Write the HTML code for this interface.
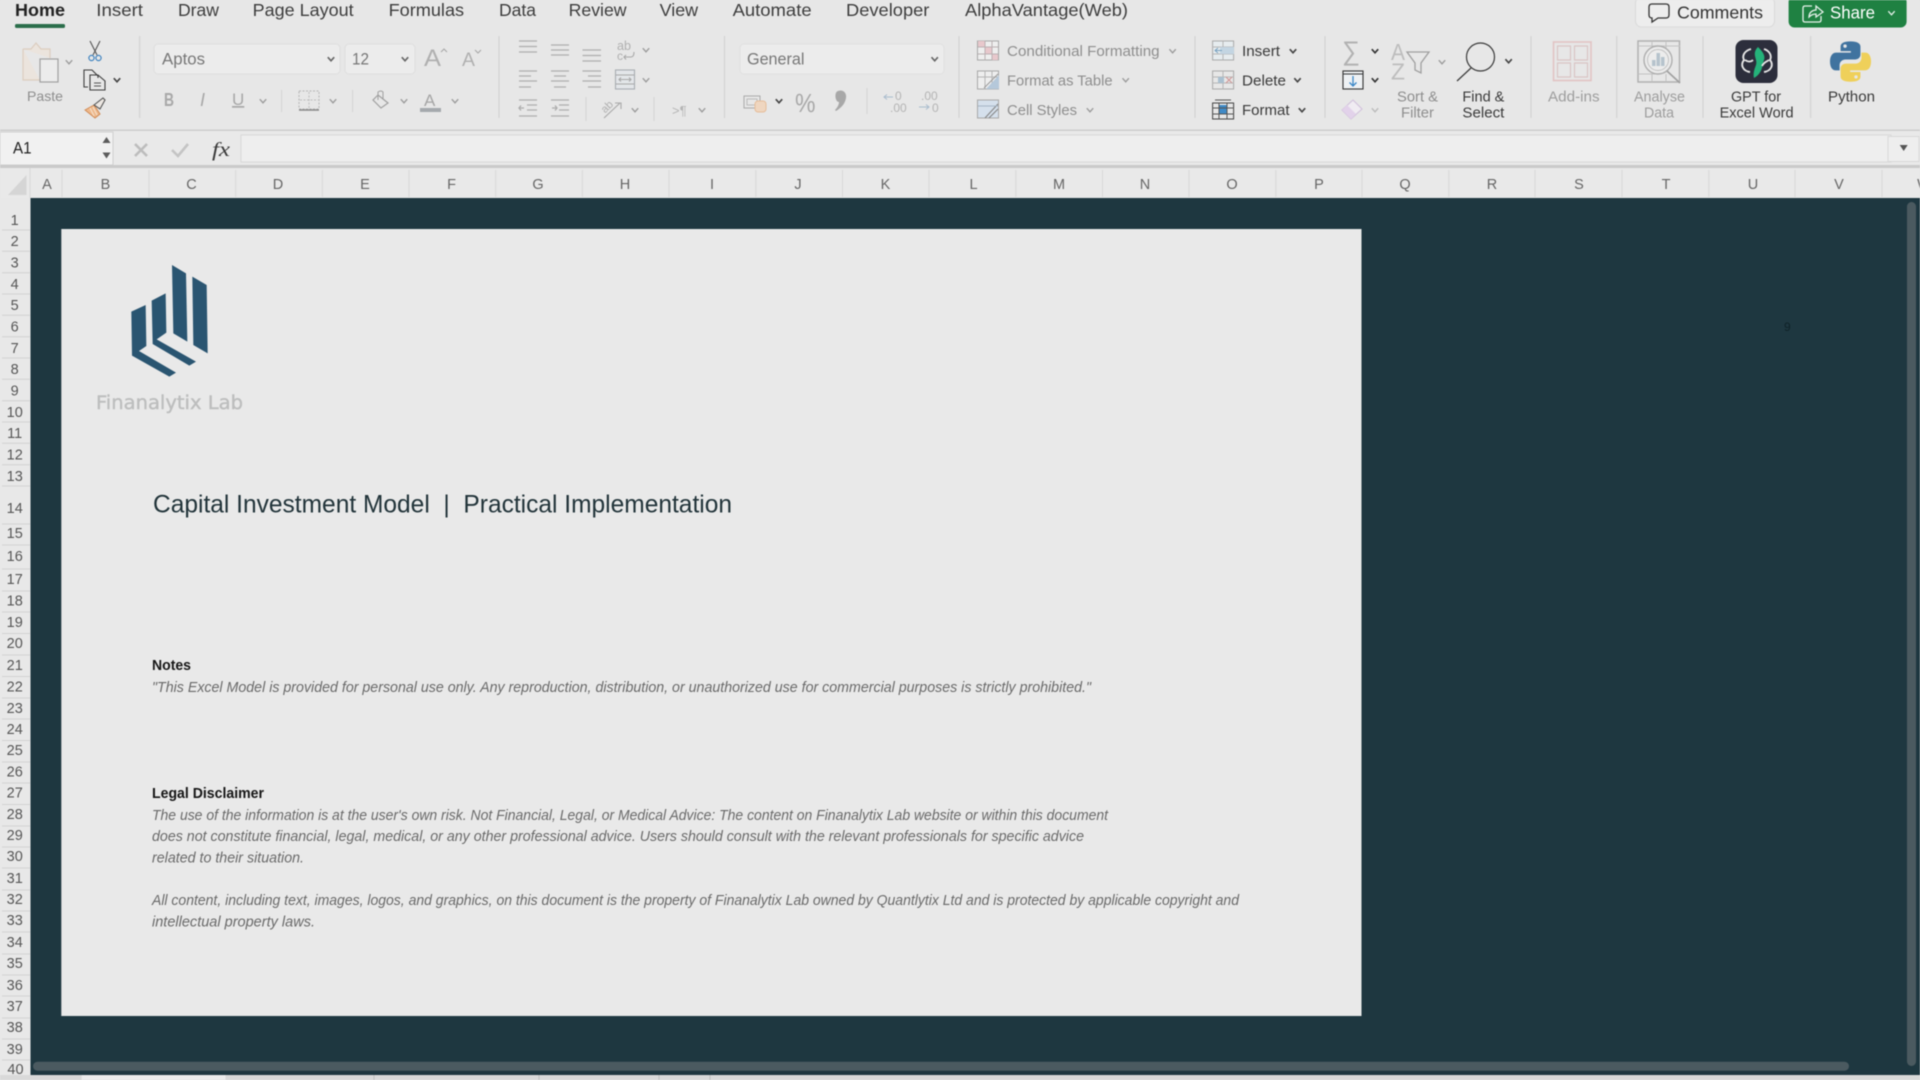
<!DOCTYPE html>
<html lang="en">
<head>
<meta charset="utf-8">
<title>Capital Investment Model</title>
<style>
html,body{margin:0;padding:0;width:1920px;height:1080px;overflow:hidden;background:#e6e6e6}
svg{display:block;filter:blur(.5px)}
text{font-family:"Liberation Sans",sans-serif;white-space:pre}
.tab{font-size:17.5px;fill:#3d3d3d}
.gr{font-size:14.5px;fill:#8e8e8e}
.dk{font-size:14.5px;fill:#3a3a3a}
.col{font-size:14.5px;fill:#666;text-anchor:middle}
.row{font-size:14.5px;fill:#565656;text-anchor:middle}
.it{font-size:14.8px;font-style:italic;fill:#6a6a6a}
.bd{font-size:14.8px;font-weight:bold;fill:#161616}
.ln{fill:none;stroke:#adadad;stroke-width:1.3}
.chev{fill:none;stroke:#9c9c9c;stroke-width:1.4}
.chevd{fill:none;stroke:#444;stroke-width:1.6}
.ic{fill:none;stroke:#a8a8a8;stroke-width:1.1}
</style>
</head>
<body>
<svg xmlns="http://www.w3.org/2000/svg" width="1920" height="1080" viewBox="0 0 1920 1080">
<defs><path id="c" d="M-3.2-1.8 0 1.8 3.2-1.8"/></defs>

<!-- ribbon -->
<rect width="1920" height="131" fill="#e7e7e7"/>
<rect y="129.5" width="1920" height="2" fill="#cdcdcd"/>

<!-- tabs -->
<text x="15" y="16" class="tab" style="font-weight:bold;fill:#222" textLength="50" lengthAdjust="spacingAndGlyphs">Home</text>
<rect x="15" y="24" width="50" height="4" rx="1.5" fill="#2b6e4b"/>
<text x="96.3" y="16" class="tab" textLength="46.7" lengthAdjust="spacingAndGlyphs">Insert</text>
<text x="178" y="16" class="tab" textLength="41" lengthAdjust="spacingAndGlyphs">Draw</text>
<text x="252.6" y="16" class="tab" textLength="101" lengthAdjust="spacingAndGlyphs">Page Layout</text>
<text x="388.6" y="16" class="tab" textLength="75.5" lengthAdjust="spacingAndGlyphs">Formulas</text>
<text x="499" y="16" class="tab" textLength="37" lengthAdjust="spacingAndGlyphs">Data</text>
<text x="568.6" y="16" class="tab" textLength="58" lengthAdjust="spacingAndGlyphs">Review</text>
<text x="659.6" y="16" class="tab" textLength="38.5" lengthAdjust="spacingAndGlyphs">View</text>
<text x="732.6" y="16" class="tab" textLength="79" lengthAdjust="spacingAndGlyphs">Automate</text>
<text x="846" y="16" class="tab" textLength="83.4" lengthAdjust="spacingAndGlyphs">Developer</text>
<text x="965" y="16" class="tab" textLength="163" lengthAdjust="spacingAndGlyphs">AlphaVantage(Web)</text>

<!-- comments/share -->
<rect x="1635.5" y="-3" width="139" height="30" rx="6" fill="#ededed" stroke="#dadada"/>
<path d="M1652 4H1666Q1669 4 1669 7V15Q1669 18 1666 18H1658L1652 22V18H1652Q1649 18 1649 15V7Q1649 4 1652 4Z" fill="none" stroke="#333" stroke-width="1.3"/>
<text x="1677" y="18.5" style="font-size:17.5px;fill:#333" textLength="86" lengthAdjust="spacingAndGlyphs">Comments</text>
<rect x="1788.6" y="-4" width="118" height="31.5" rx="6" fill="#1f8142"/>
<path d="M1812 6H1805Q1803 6 1803 8V20Q1803 22 1805 22H1819Q1821 22 1821 20V16M1809 17C1809 12 1813 10 1816 10V6L1823 12 1816 17V14C1813 14 1811 15 1809 17Z" fill="none" stroke="#e6f1ea" stroke-width="1.3"/>
<text x="1830" y="18.5" style="font-size:17.5px;fill:#fff" textLength="45" lengthAdjust="spacingAndGlyphs">Share</text>
<use href="#c" x="1891.5" y="13" fill="none" stroke="#e6f1ea" stroke-width="1.3"/>

<!-- group separators -->
<path d="M139.6 36V118M499 36V118M724.5 36V118M959 36V118M1195 36V118M1325 36V118M1531 36V118M1616.7 36V118M1703 36V118M1810.6 36V118" stroke="#d3d3d3" stroke-width="1.2"/>

<!-- clipboard -->
<path d="M23 49H31L36 43 41 49H50V58M40 80H23V49" fill="#ebe4dd" stroke="#dccdbf" stroke-width="1.2"/>
<rect x="40" y="59" width="18" height="23" fill="#ececec" stroke="#a0a0a0" stroke-width="1.2"/>
<use href="#c" x="69" y="62" class="chev"/>
<text x="27" y="101" class="gr" style="font-size:14px" textLength="36" lengthAdjust="spacingAndGlyphs">Paste</text>
<path d="M90 41 97 55M100 41 93 55" stroke="#555" stroke-width="1.1" fill="none"/>
<circle cx="91.5" cy="58" r="2.6" fill="none" stroke="#3f83c0" stroke-width="1.2"/>
<circle cx="98.5" cy="58" r="2.6" fill="none" stroke="#3f83c0" stroke-width="1.2"/>
<path d="M88 87H84V70H92L98 76V78M90 90V75H98L105 81V90Z" fill="none" stroke="#3d3d3d" stroke-width="1.1"/>
<path d="M94 83H101M94 86H101" stroke="#555"/>
<use href="#c" x="117" y="80" class="chevd"/>
<path d="M85 110 94 105 100 114 95 118Z" fill="#eeb98c" stroke="#d08a54"/>
<path d="M94 105 103 98 105 100 100 109Z" fill="#ece7e2" stroke="#555" stroke-width="1.1"/>
<path d="M90 108 94 116M93 107 97 115" stroke="#f6e2d0"/>

<!-- font controls -->
<rect x="154" y="44" width="186" height="30" rx="4" fill="#ececec" stroke="#dedede"/>
<text x="162" y="64.5" style="font-size:16.5px;fill:#777" textLength="43" lengthAdjust="spacingAndGlyphs">Aptos</text>
<use href="#c" x="331" y="59" class="chevd" style="stroke:#666"/>
<rect x="345" y="44" width="70" height="30" rx="4" fill="#ececec" stroke="#dedede"/>
<text x="352" y="64.5" style="font-size:16.5px;fill:#777" textLength="17" lengthAdjust="spacingAndGlyphs">12</text>
<use href="#c" x="405" y="59" class="chevd" style="stroke:#666"/>
<text x="424" y="66" style="font-size:24px;fill:#b0b0b0" textLength="17" lengthAdjust="spacingAndGlyphs">A</text>
<path d="M441 52 444 49 447 52" class="ic"/>
<text x="462" y="66" style="font-size:19px;fill:#b0b0b0" textLength="13" lengthAdjust="spacingAndGlyphs">A</text>
<path d="M475 50 478 53 481 50" class="ic"/>
<text x="164" y="106" style="font-size:18px;font-weight:bold;fill:#a8a8a8" textLength="10" lengthAdjust="spacingAndGlyphs">B</text>
<text x="200" y="106" style="font-size:18px;font-style:italic;fill:#a8a8a8">I</text>
<text x="232" y="105" style="font-size:17px;fill:#a8a8a8;text-decoration:underline">U</text>
<use href="#c" x="263" y="101" class="chev"/>
<path d="M281.6 90V112M352.6 90V112" stroke="#d3d3d3"/>
<rect x="299" y="91" width="20" height="18" fill="none" stroke="#b5b5b5" stroke-dasharray="2 1.5"/>
<path d="M309 92V108M300 100H318" stroke="#bcbcbc" stroke-dasharray="2 1.5"/>
<path d="M299 110H319" stroke="#888" stroke-width="1.6"/>
<use href="#c" x="333" y="101" class="chev"/>
<path d="M378 95 388 103 381 108 373 100Z" fill="none" stroke="#a0a0a0" stroke-width="1.2"/>
<path d="M378 100V92Q381 90 383 92V99" fill="none" stroke="#a0a0a0"/>
<use href="#c" x="404" y="101" class="chev"/>
<text x="424" y="106" style="font-size:17px;fill:#a6a6a6">A</text>
<rect x="420" y="108" width="21" height="4" fill="#a5a9ad"/>
<use href="#c" x="455" y="101" class="chev"/>

<!-- alignment -->
<g class="ln">
<path d="M519 41H537M519 46.5H537M519 52H537"/>
<path d="M551 45H569M551 50H569M551 55H569"/>
<path d="M582.5 50H601M582.5 55.5H601M582.5 61H601"/>
<path d="M519 71H537M519 76H531M519 81H537M519 87H531"/>
<path d="M551 71H569M554 76H566M551 81H569M554 87H566"/>
<path d="M582.5 71H601M588 76H601M582.5 81H601M588 87H601"/>
<path d="M519 100H537M527 105H537M527 110H537M519 116H537M524 108H519M521 105.5 519 108 521 110.5"/>
<path d="M551 100H569M559 105H569M559 110H569M551 116H569M552 108H557M555 105.500 557 108 555 110.500"/>
</g>
<text x="617" y="50" style="font-size:13px;fill:#b0b0b0" textLength="14" lengthAdjust="spacingAndGlyphs">ab</text>
<text x="617" y="60" style="font-size:12px;fill:#b0b0b0">c</text>
<path d="M624 57H631Q634 57 634 52M626 55 624 57 626 59.500" class="ic"/>
<rect x="615.500" y="70" width="19" height="19" fill="#e3e6e9" stroke="#a8adb2" stroke-width="1.1"/>
<path d="M616 75H634M616 84H634M619 79.500H631M621 77.500 619 79.500 621 81.500M629 77.500 631 79.500 629 81.500" class="ic"/>
<use href="#c" x="646" y="50" class="chev"/>
<use href="#c" x="646" y="80" class="chev"/>
<path d="M586 97V121M654 97V121" stroke="#d3d3d3"/>
<path d="M604 118 620 103M615 103H621V109" class="ic"/>
<text x="602" y="110" transform="rotate(-45 608 108)" style="font-size:11px;fill:#b0b0b0">ab</text>
<use href="#c" x="635" y="110" class="chev"/>
<text x="672" y="115" style="font-size:13px;fill:#b5b5b5">&gt;¶</text>
<use href="#c" x="702" y="110" class="chev"/>

<!-- number -->
<rect x="740" y="44" width="204" height="30" rx="4" fill="#ececec" stroke="#e0e0e0"/>
<text x="747" y="64.5" style="font-size:16.5px;fill:#777" textLength="57.500" lengthAdjust="spacingAndGlyphs">General</text>
<use href="#c" x="934.700" y="59" class="chevd" style="stroke:#666"/>
<rect x="744" y="96" width="16" height="12" fill="none" stroke="#aaa"/>
<rect x="747" y="99" width="10" height="6" fill="none" stroke="#bbb"/>
<rect x="755" y="101" width="11" height="11" rx="3" fill="#efd6c0" stroke="#e6bd9a"/>
<use href="#c" x="779" y="101" class="chevd"/>
<text x="795" y="112" style="font-size:26px;fill:#a8a8a8" textLength="20.500" lengthAdjust="spacingAndGlyphs">%</text>
<path d="M838 91C843 89 847 93 846 98C845 104 841 108 836 111L835 110C838 107 839 104 839 102C835 102 834 92 838 91Z" fill="#a8a8a8"/>
<path d="M867 88V114" stroke="#d3d3d3"/>
<text x="895" y="100" style="font-size:12px;fill:#b4b4b4">0</text>
<text x="890" y="112" style="font-size:12px;fill:#b4b4b4">.00</text>
<path d="M884 97H893M887 94.500 884 97 887 99.500" fill="none" stroke="#a9bccd"/>
<text x="921" y="100" style="font-size:12px;fill:#b4b4b4">.00</text>
<text x="932" y="112" style="font-size:12px;fill:#b4b4b4">0</text>
<path d="M919 107H929M926 104.500 929 107 926 109.500" fill="none" stroke="#a9bccd"/>

<!-- styles -->
<rect x="977.500" y="41" width="21" height="19" fill="#eee" stroke="#a8a8a8"/>
<path d="M978 47H985V54H992V60H998V54H992V47H985V41H978Z" fill="#e8c8cc"/>
<path d="M985 41V60M992 41V60M978 47H998M978 54H998" stroke="#bbb0b2" fill="none"/>
<text x="1007" y="56" class="gr" textLength="152.600" lengthAdjust="spacingAndGlyphs">Conditional Formatting</text>
<use href="#c" x="1172.600" y="51" class="chev"/>
<rect x="977.500" y="71" width="21" height="18" fill="#eee" stroke="#a8a8a8"/>
<path d="M978 77H998M985 71V89M992 71V89" stroke="#b4b4b4"/>
<path d="M986 89 999 75V89Z" fill="#b5c8da"/>
<path d="M984 88 998 74" stroke="#999"/>
<text x="1007" y="85.500" class="gr" textLength="105.600" lengthAdjust="spacingAndGlyphs">Format as Table</text>
<use href="#c" x="1125.700" y="80" class="chev"/>
<rect x="977.500" y="100" width="21" height="18" fill="#d5e0ec" stroke="#a8a8a8"/>
<path d="M985 118 998 104M989 118 998 109" stroke="#888" stroke-width="1.2"/>
<path d="M978 106H998" stroke="#a5b5c5"/>
<text x="1007" y="115" class="gr" textLength="70" lengthAdjust="spacingAndGlyphs">Cell Styles</text>
<use href="#c" x="1090" y="110" class="chev"/>

<!-- cells -->
<rect x="1212.600" y="41" width="21" height="19" fill="#e6ecef" stroke="#aaa"/>
<path d="M1212.600 47H1234M1212.600 54H1234M1223 41V60" stroke="#b5b5b5"/>
<rect x="1220" y="47" width="14" height="7" fill="#c3d5e2"/>
<path d="M1222 50.500H1215M1218 48 1215 50.500 1218 53" fill="none" stroke="#7aa3c0"/>
<text x="1242" y="56" class="dk" textLength="38" lengthAdjust="spacingAndGlyphs">Insert</text>
<use href="#c" x="1293" y="51" class="chevd"/>
<rect x="1212.600" y="71" width="21" height="18" fill="none" stroke="#aaa"/>
<path d="M1212.600 77H1234M1212.600 83H1234M1223 71V89" stroke="#b5b5b5"/>
<path d="M1226 77 1232 83M1232 77 1226 83" stroke="#d19a9a" stroke-width="1.2"/>
<rect x="1218" y="77" width="6" height="6" fill="#aac0d0"/>
<text x="1242" y="85.500" class="dk" textLength="44" lengthAdjust="spacingAndGlyphs">Delete</text>
<use href="#c" x="1297.500" y="80" class="chevd"/>
<rect x="1212.600" y="103" width="21" height="16" fill="none" stroke="#444"/>
<rect x="1219" y="105" width="8" height="9" fill="#3f8ac7"/>
<path d="M1212.600 108H1234M1212.600 114H1234M1219 103V119M1227 103V119M1215 100H1231" stroke="#555" fill="none"/>
<text x="1242" y="115" class="dk" textLength="47.500" lengthAdjust="spacingAndGlyphs">Format</text>
<use href="#c" x="1302" y="110" class="chevd"/>

<!-- editing -->
<text x="1342" y="60" style="font-size:27px;fill:#b2b2b2" textLength="18" lengthAdjust="spacingAndGlyphs">∑</text>
<use href="#c" x="1375" y="51" class="chevd" style="stroke:#333"/>
<rect x="1343" y="71" width="20" height="18" fill="#eef1f4" stroke="#333" stroke-width="1.1"/>
<path d="M1343 74H1363" stroke="#333"/>
<path d="M1353 76V86M1349.500 82.500 1353 86 1356.500 82.500" fill="none" stroke="#3a86c6" stroke-width="1.3"/>
<use href="#c" x="1375" y="80" class="chevd" style="stroke:#333"/>
<path d="M1342 110 1353 100 1362 109 1351 119Z" fill="#f0ecf2" stroke="#d2c2dc" stroke-width="1.100"/>
<path d="M1342 110 1347 105 1356 114 1351 119Z" fill="#e2d2ea"/>
<use href="#c" x="1375" y="110" class="chev" style="stroke:#bbb"/>
<text x="1391" y="60" style="font-size:23px;fill:#bdbdbd" textLength="14" lengthAdjust="spacingAndGlyphs">A</text>
<text x="1391" y="79.500" style="font-size:23px;fill:#bdbdbd" textLength="14" lengthAdjust="spacingAndGlyphs">Z</text>
<path d="M1407 52H1429L1421 63V73L1415 70V63Z" fill="none" stroke="#a0a0a0" stroke-width="1.3"/>
<use href="#c" x="1442" y="62" class="chev"/>
<text x="1397" y="101.500" class="gr" textLength="41" lengthAdjust="spacingAndGlyphs">Sort &amp;</text>
<text x="1401" y="117.500" class="gr" textLength="33" lengthAdjust="spacingAndGlyphs">Filter</text>
<ellipse cx="1480.500" cy="57" rx="14" ry="14" fill="none" stroke="#3a3a3a" stroke-width="1.200"/>
<path d="M1471 68 1457 81" stroke="#3a3a3a" stroke-width="1.200"/>
<use href="#c" x="1508.600" y="61" class="chevd"/>
<text x="1462.400" y="101.500" class="dk" textLength="42" lengthAdjust="spacingAndGlyphs">Find &amp;</text>
<text x="1462.400" y="117.500" class="dk" textLength="42" lengthAdjust="spacingAndGlyphs">Select</text>

<!-- add-ins -->
<rect x="1553.500" y="42" width="37.500" height="38.500" fill="none" stroke="#e2c3c3" stroke-width="1.600"/>
<rect x="1557.500" y="46" width="13" height="14" fill="none" stroke="#d9c4c4" stroke-width="1.200"/>
<rect x="1574.500" y="46" width="13" height="14" fill="none" stroke="#d9c4c4" stroke-width="1.200"/>
<rect x="1557.500" y="63" width="13" height="14" fill="none" stroke="#d9c4c4" stroke-width="1.200"/>
<rect x="1574.500" y="63" width="13" height="14" fill="none" stroke="#d9c4c4" stroke-width="1.200"/>
<text x="1548" y="101.500" class="gr" style="fill:#9d9d9d" textLength="51.600" lengthAdjust="spacingAndGlyphs">Add-ins</text>

<!-- analyse -->
<rect x="1638" y="41" width="41.500" height="41" fill="none" stroke="#aeaeae" stroke-width="1.400"/>
<path d="M1638 46H1680M1652 41V48M1666 41V48M1638 74H1655M1652 74V82M1666 74V82" stroke="#c2c2c2" fill="none"/>
<circle cx="1658" cy="60" r="14" fill="#ececec" stroke="#aeaeae" stroke-width="1.400"/>
<circle cx="1658" cy="60" r="10.500" fill="none" stroke="#c2c2c2"/>
<rect x="1652" y="60" width="3.500" height="6" fill="#b6c3cc"/>
<rect x="1656.500" y="53" width="3.500" height="13" fill="#b6c3cc"/>
<rect x="1661" y="57" width="3.500" height="9" fill="#b6c3cc"/>
<path d="M1667 71 1680 83" stroke="#9f9f9f" stroke-width="1.600"/>
<text x="1634" y="101.500" class="gr" style="fill:#9d9d9d" textLength="51" lengthAdjust="spacingAndGlyphs">Analyse</text>
<text x="1644" y="117.500" class="gr" style="fill:#9d9d9d" textLength="30" lengthAdjust="spacingAndGlyphs">Data</text>

<!-- GPT -->
<rect x="1735.500" y="40" width="42" height="43" rx="8" fill="#2c2e3c"/>
<path d="M1758 47C1751 54 1758 59 1756 65C1754 70 1753 74 1754 78C1763 73 1762 65 1764 60C1766 55 1761 50 1758 47Z" fill="#25b27a"/>
<path d="M1751 49C1744 51 1742 56 1744 60C1740 65 1743 71 1750 72M1764 49C1770 51 1772 56 1770 60C1774 65 1771 71 1764 72M1745 60C1748 62 1751 62 1753 60M1769 60C1766 62 1764 62 1762 66" fill="none" stroke="#e6e6e6" stroke-width="1.900"/>
<text x="1731" y="101.500" class="dk" textLength="50" lengthAdjust="spacingAndGlyphs">GPT for</text>
<text x="1719.600" y="117.500" class="dk" textLength="74" lengthAdjust="spacingAndGlyphs">Excel Word</text>

<!-- python -->
<g transform="translate(1830 41) scale(1.710)">
<path d="M12 .2C8 .2 6.200 1.400 6.200 3.200V5.900H12.200V6.800H3.600C1.600 6.800 0 8.500 0 12C0 15.500 1.500 17.200 3.300 17.200H5.600V14.200C5.600 12.300 7 10.800 9 10.800H14.900C16.500 10.800 17.800 9.500 17.800 8V3.200C17.800 1.400 15.700 .2 12 .2Z" fill="#40739f"/>
<circle cx="8.800" cy="3" r="1" fill="#e7e7e7"/>
<g transform="rotate(180 12 12)">
<path d="M12 .2C8 .2 6.200 1.400 6.200 3.200V5.900H12.200V6.800H3.600C1.600 6.800 0 8.500 0 12C0 15.500 1.500 17.200 3.300 17.200H5.600V14.200C5.600 12.300 7 10.800 9 10.800H14.900C16.500 10.800 17.800 9.500 17.800 8V3.200C17.800 1.400 15.700 .2 12 .2Z" fill="#efd05a"/>
<circle cx="8.800" cy="3" r="1" fill="#e7e7e7"/>
</g>
</g>
<text x="1828" y="101.500" class="dk" textLength="47" lengthAdjust="spacingAndGlyphs">Python</text>

<!-- formula bar -->
<rect y="131" width="1920" height="36" fill="#e9e9e9"/>
<rect x="0" y="132" width="113" height="33" fill="#f1f1f1" stroke="#cfcfcf"/>
<text x="13" y="153.500" style="font-size:16.500px;fill:#222" textLength="18.500" lengthAdjust="spacingAndGlyphs">A1</text>
<path d="M102.500 143H110.500L106.500 137ZM102.500 152.500H110.500L106.500 158.500Z" fill="#5c5c5c"/>
<path d="M135 144 147 156M147 144 135 156" stroke="#bdbdbd" stroke-width="2.600"/>
<path d="M172 150 178 156 188 144" fill="none" stroke="#c4c4c4" stroke-width="2.600"/>
<text x="212" y="156" style="font-size:20px;font-style:italic;font-family:'Liberation Serif',serif;fill:#3a3a3a" textLength="18" lengthAdjust="spacingAndGlyphs">fx</text>
<rect x="241" y="135" width="1650" height="27" fill="#eeeeee" stroke="#d8d8d8"/>
<rect x="1888" y="136.500" width="31" height="25" fill="#eeeeee" stroke="#d8d8d8"/>
<path d="M1899.700 145H1907.700L1903.700 151Z" fill="#555"/>
<rect y="165" width="1920" height="3" fill="#cacaca"/>

<!-- column header -->
<rect y="168" width="1920" height="30" fill="#e9e9e9"/>
<path d="M26.500 175V195H8Z" fill="#d5d5d5"/>
<path d="M30 168V198M62 170V197M149 170V197M235.700 170V197M322.400 170V197M409 170V197M495.700 170V197M582.400 170V197M669 170V197M755.800 170V197M842.500 170V197M929 170V197M1015.800 170V197M1102.500 170V197M1189 170V197M1275.800 170V197M1362 170V197M1448.800 170V197M1535 170V197M1622 170V197M1708.800 170V197M1795 170V197M1882 170V197" stroke="#d8d8d8"/>
<text x="47" y="189" class="col">A</text><text x="105.500" y="189" class="col">B</text><text x="191.500" y="189" class="col">C</text><text x="278" y="189" class="col">D</text><text x="365" y="189" class="col">E</text><text x="451.500" y="189" class="col">F</text><text x="538" y="189" class="col">G</text><text x="625" y="189" class="col">H</text><text x="712" y="189" class="col">I</text><text x="798" y="189" class="col">J</text><text x="885.500" y="189" class="col">K</text><text x="973.500" y="189" class="col">L</text><text x="1059" y="189" class="col">M</text><text x="1145" y="189" class="col">N</text><text x="1232" y="189" class="col">O</text><text x="1319" y="189" class="col">P</text><text x="1405" y="189" class="col">Q</text><text x="1492" y="189" class="col">R</text><text x="1579" y="189" class="col">S</text><text x="1666" y="189" class="col">T</text><text x="1753" y="189" class="col">U</text><text x="1839" y="189" class="col">V</text><text x="1924" y="189" class="col">W</text>

<!-- row header -->
<rect y="198" width="30.500" height="877" fill="#e8e8e8"/>
<path d="M2 230H30M2 251.300H30M2 272.700H30M2 294H30M2 315.300H30M2 336.700H30M2 358H30M2 379.300H30M2 400.700H30M2 422H30M2 443.300H30M2 464.700H30M2 486H30M2 524H30M2 545H30M2 569H30M2 591H30M2 612H30M2 633.500H30M2 655H30M2 676.500H30M2 698H30M2 719H30M2 740.500H30M2 762H30M2 783H30M2 804.500H30M2 826H30M2 847H30M2 868H30M2 890H30M2 911H30M2 932H30M2 954H30M2 975H30M2 996H30M2 1018H30M2 1039H30M2 1060H30" stroke="#d2d2d2"/>
<g transform="translate(0 -.8)">
<text x="14.700" y="226" class="row">1</text><text x="14.700" y="247" class="row">2</text><text x="14.700" y="268.500" class="row">3</text><text x="14.700" y="290" class="row">4</text><text x="14.700" y="311" class="row">5</text><text x="14.700" y="332.500" class="row">6</text><text x="14.700" y="354" class="row">7</text><text x="14.700" y="375" class="row">8</text><text x="14.700" y="396.500" class="row">9</text><text x="14.700" y="418" class="row">10</text><text x="14.700" y="439" class="row">11</text><text x="14.700" y="460.500" class="row">12</text><text x="14.700" y="482" class="row">13</text><text x="14.700" y="514" class="row">14</text><text x="14.700" y="539" class="row">15</text><text x="14.700" y="562" class="row">16</text><text x="14.700" y="585" class="row">17</text><text x="14.700" y="606.500" class="row">18</text><text x="14.700" y="628" class="row">19</text><text x="14.700" y="649" class="row">20</text><text x="14.700" y="671" class="row">21</text><text x="14.700" y="692.500" class="row">22</text><text x="14.700" y="714" class="row">23</text><text x="14.700" y="735" class="row">24</text><text x="14.700" y="756" class="row">25</text><text x="14.700" y="777.500" class="row">26</text><text x="14.700" y="798.500" class="row">27</text><text x="14.700" y="820" class="row">28</text><text x="14.700" y="841" class="row">29</text><text x="14.700" y="862" class="row">30</text><text x="14.700" y="884" class="row">31</text><text x="14.700" y="905" class="row">32</text><text x="14.700" y="926" class="row">33</text><text x="14.700" y="948" class="row">34</text><text x="14.700" y="969" class="row">35</text><text x="14.700" y="991" class="row">36</text><text x="14.700" y="1012" class="row">37</text><text x="14.700" y="1033" class="row">38</text><text x="14.700" y="1055" class="row">39</text><text x="15.500" y="1075" class="row">40</text>
</g>

<!-- sheet area -->
<rect x="30.500" y="198" width="1889.500" height="877" fill="#1e3740"/>
<rect x="61.300" y="229" width="1300.200" height="787" fill="#e9e9e9"/>
<rect x="33" y="1061.700" width="1816" height="9" rx="4.500" fill="#4b5a60"/>
<rect x="1907" y="202" width="9" height="864" rx="4.500" fill="#4b5a60"/>
<text x="1784" y="331" style="font-size:12px;fill:#0f2228">9</text>

<!-- logo -->
<g transform="translate(0 210) scale(.33333)" fill="#2a5571">
<path d="M516 165 558 190 562 395 520 370Z"/>
<path d="M577 200 620 225 623 430 580 405Z"/>
<path d="M455 272 497 250 499 368 470 388 588 455 568 467 458 402Z"/>
<path d="M394 305 437 285 439 408 417 423 528 488 508 500 396 437Z"/>
</g>
<text x="96" y="409" style="font-family:'DejaVu Sans',sans-serif;font-size:18.500px;fill:#bdbebe;stroke:#bdbebe;stroke-width:.4" textLength="147" lengthAdjust="spacingAndGlyphs">Finanalytix Lab</text>

<!-- content -->
<text x="153" y="512.700" style="font-size:25px;fill:#22343a" textLength="579" lengthAdjust="spacingAndGlyphs">Capital Investment Model  |  Practical Implementation</text>
<text x="152" y="670" class="bd" textLength="39" lengthAdjust="spacingAndGlyphs">Notes</text>
<text x="152" y="692" class="it" textLength="939" lengthAdjust="spacingAndGlyphs">"This Excel Model is provided for personal use only. Any reproduction, distribution, or unauthorized use for commercial purposes is strictly prohibited."</text>
<text x="152" y="798" class="bd" textLength="112" lengthAdjust="spacingAndGlyphs">Legal Disclaimer</text>
<text x="152" y="820" class="it" textLength="956" lengthAdjust="spacingAndGlyphs">The use of the information is at the user's own risk. Not Financial, Legal, or Medical Advice: The content on Finanalytix Lab website or within this document</text>
<text x="152" y="841" class="it" textLength="932" lengthAdjust="spacingAndGlyphs">does not constitute financial, legal, medical, or any other professional advice. Users should consult with the relevant professionals for specific advice</text>
<text x="152" y="862.500" class="it" textLength="152" lengthAdjust="spacingAndGlyphs">related to their situation.</text>
<text x="152" y="905" class="it" textLength="1087" lengthAdjust="spacingAndGlyphs">All content, including text, images, logos, and graphics, on this document is the property of Finanalytix Lab owned by Quantlytix Ltd and is protected by applicable copyright and</text>
<text x="152" y="926.500" class="it" textLength="163" lengthAdjust="spacingAndGlyphs">intellectual property laws.</text>

<!-- sheet tabs -->
<rect y="1075" width="1920" height="5" fill="#d9d9d9"/>
<rect x="81.600" y="1075" width="144" height="5" fill="#ececec"/>
<path d="M374 1075V1080M539 1075V1080M659 1075V1080M710 1075V1080" stroke="#bfbfbf"/>
</svg>
</body>
</html>
